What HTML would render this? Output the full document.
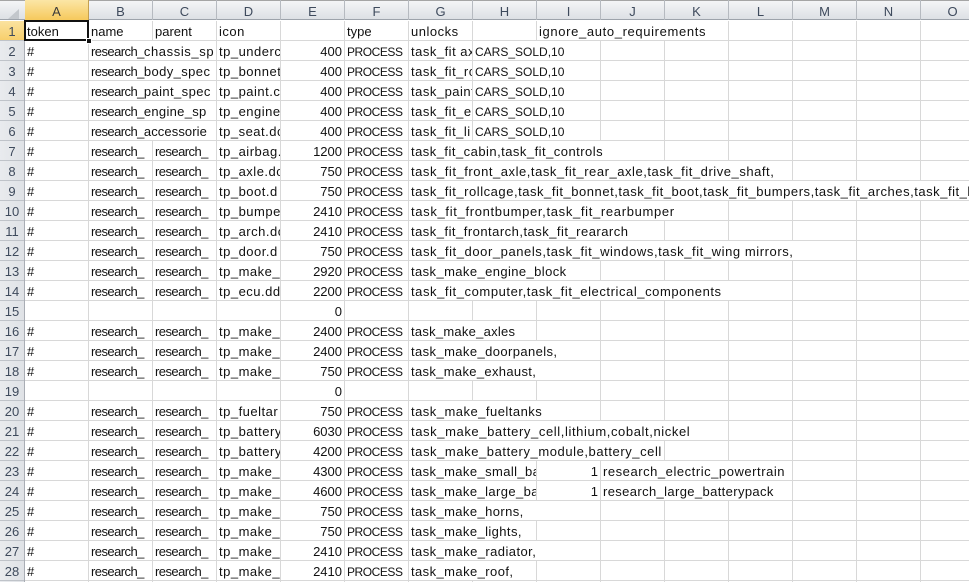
<!DOCTYPE html>
<html><head><meta charset="utf-8"><style>
html,body{margin:0;padding:0;background:#fff}
#p{position:relative;width:969px;height:582px;overflow:hidden;background:#fff;font-family:"Liberation Sans",sans-serif;font-size:13px;color:#111}
#g{position:absolute;left:25px;top:21px;width:944px;height:561px;background:linear-gradient(to right,transparent 63px,#d8d8d8 63px) 0 0/64px 20px,linear-gradient(to bottom,transparent 19px,#d8d8d8 19px) 0 0/64px 20px}
#hd{position:absolute;left:0;top:0;width:969px;height:20px;background:linear-gradient(#f4f5f7,#dde0e5);border-bottom:1px solid #9da3ab;border-top:1px solid #a5a5a5;box-sizing:border-box}
#rh{position:absolute;left:0;top:21px;width:24px;height:561px;background:linear-gradient(to bottom,#bfc3c9 1px,transparent 1px) 0 19px/24px 20px,linear-gradient(to right,#e9ebee,#dfe2e6);border-right:1px solid #a9adb4}
.h{position:absolute;top:-1px;height:20px;width:63px;line-height:23px;text-align:center;color:#3e4a5c;border-right:1px solid #b6bac0;font-size:13px}
.n{position:absolute;left:0;width:24px;height:19px;line-height:22px;text-align:center;color:#3e4a5c}
.c{position:absolute;height:19px;line-height:22px;overflow:hidden;white-space:nowrap;background:#fff;box-sizing:border-box;padding-left:2px}
.r{text-align:right;padding:0 2px 0 0}
.a{left:25px;width:63px}.b{left:89px;width:127px}.bb{left:89px;width:63px;letter-spacing:-.55px}.x{left:153px;width:63px;letter-spacing:-.55px}.d{left:217px;width:63px;letter-spacing:.5px}.e{left:281px;width:63px}.f{left:345px;width:63px;font-size:12px;letter-spacing:-.45px}.g{left:409px;width:63px;letter-spacing:.5px}.hh{left:473px;width:127px;font-size:12px}
.s{letter-spacing:-.55px}
</style></head><body><div id="p">
<div id="g"></div>
<div id="hd">
<div style="position:absolute;left:8px;top:8px;width:0;height:0;border-left:11px solid transparent;border-bottom:10px solid #c3c7cc"></div>
<div class="h" style="left:25px;background:linear-gradient(#fbe6a6,#f6c95c);color:#3a3a3a;border-right:1px solid #c4a050">A</div>
<div class="h" style="left:89px">B</div><div class="h" style="left:153px">C</div><div class="h" style="left:217px">D</div><div class="h" style="left:281px">E</div><div class="h" style="left:345px">F</div><div class="h" style="left:409px">G</div><div class="h" style="left:473px">H</div><div class="h" style="left:537px">I</div><div class="h" style="left:601px">J</div><div class="h" style="left:665px">K</div><div class="h" style="left:729px">L</div><div class="h" style="left:793px">M</div><div class="h" style="left:857px">N</div><div class="h" style="left:921px">O</div>
</div>
<div id="rh"></div>
<div class="n" style="top:21px;background:linear-gradient(#fbe3a0,#f7cf6c)">1</div>
<div class="n" style="top:41px">2</div><div class="n" style="top:61px">3</div><div class="n" style="top:81px">4</div><div class="n" style="top:101px">5</div><div class="n" style="top:121px">6</div><div class="n" style="top:141px">7</div><div class="n" style="top:161px">8</div><div class="n" style="top:181px">9</div><div class="n" style="top:201px">10</div><div class="n" style="top:221px">11</div><div class="n" style="top:241px">12</div><div class="n" style="top:261px">13</div><div class="n" style="top:281px">14</div><div class="n" style="top:301px">15</div><div class="n" style="top:321px">16</div><div class="n" style="top:341px">17</div><div class="n" style="top:361px">18</div><div class="n" style="top:381px">19</div><div class="n" style="top:401px">20</div><div class="n" style="top:421px">21</div><div class="n" style="top:441px">22</div><div class="n" style="top:461px">23</div><div class="n" style="top:481px">24</div><div class="n" style="top:501px">25</div><div class="n" style="top:521px">26</div><div class="n" style="top:541px">27</div><div class="n" style="top:561px">28</div>

<div class="c a" style="top:21px">token</div><div class="c" style="left:89px;width:63px;top:21px">name</div><div class="c" style="left:153px;width:63px;top:21px">parent</div><div class="c d" style="top:21px">icon</div><div class="c f" style="top:21px;font-size:13px;letter-spacing:0">type</div><div class="c g" style="top:21px">unlocks</div><div class="c" style="left:537px;top:21px;width:191px;letter-spacing:.64px">ignore_auto_requirements</div>

<div class="c a" style="top:41px">#</div><div class="c b" style="top:41px;letter-spacing:.6px"><span class="s">research_</span>chassis_sp</div><div class="c d" style="top:41px">tp_underc</div><div class="c e r" style="top:41px">400</div><div class="c f" style="top:41px">PROCESS</div><div class="c g" style="top:41px">task_fit ax</div><div class="c hh" style="top:41px">CARS_SOLD,10</div>
<div class="c a" style="top:61px">#</div><div class="c b" style="top:61px;letter-spacing:.4px"><span class="s">research_</span>body_spec</div><div class="c d" style="top:61px">tp_bonnet</div><div class="c e r" style="top:61px">400</div><div class="c f" style="top:61px">PROCESS</div><div class="c g" style="top:61px">task_fit_rc</div><div class="c hh" style="top:61px">CARS_SOLD,10</div>
<div class="c a" style="top:81px">#</div><div class="c b" style="top:81px;letter-spacing:.4px"><span class="s">research_</span>paint_spec</div><div class="c d" style="top:81px">tp_paint.c</div><div class="c e r" style="top:81px">400</div><div class="c f" style="top:81px">PROCESS</div><div class="c g" style="top:81px">task_paint</div><div class="c hh" style="top:81px">CARS_SOLD,10</div>
<div class="c a" style="top:101px">#</div><div class="c b" style="top:101px;letter-spacing:.3px"><span class="s">research_</span>engine_sp</div><div class="c d" style="top:101px">tp_engine</div><div class="c e r" style="top:101px">400</div><div class="c f" style="top:101px">PROCESS</div><div class="c g" style="top:101px">task_fit_e</div><div class="c hh" style="top:101px">CARS_SOLD,10</div>
<div class="c a" style="top:121px">#</div><div class="c b" style="top:121px;letter-spacing:.1px"><span class="s">research_</span>accessorie</div><div class="c d" style="top:121px">tp_seat.dc</div><div class="c e r" style="top:121px">400</div><div class="c f" style="top:121px">PROCESS</div><div class="c g" style="top:121px">task_fit_li</div><div class="c hh" style="top:121px">CARS_SOLD,10</div>
<div class="c a" style="top:141px">#</div><div class="c bb" style="top:141px">research_</div><div class="c x" style="top:141px">research_</div><div class="c d" style="top:141px">tp_airbag.</div><div class="c e r" style="top:141px">1200</div><div class="c f" style="top:141px">PROCESS</div><div class="c g" style="top:141px;width:255px;letter-spacing:.47px">task_fit_cabin,task_fit_controls</div>
<div class="c a" style="top:161px">#</div><div class="c bb" style="top:161px">research_</div><div class="c x" style="top:161px">research_</div><div class="c d" style="top:161px">tp_axle.dc</div><div class="c e r" style="top:161px">750</div><div class="c f" style="top:161px">PROCESS</div><div class="c g" style="top:161px;width:383px;letter-spacing:.54px">task_fit_front_axle,task_fit_rear_axle,task_fit_drive_shaft,</div>
<div class="c a" style="top:181px">#</div><div class="c bb" style="top:181px">research_</div><div class="c x" style="top:181px">research_</div><div class="c d" style="top:181px">tp_boot.d</div><div class="c e r" style="top:181px">750</div><div class="c f" style="top:181px">PROCESS</div><div class="c g" style="top:181px;width:560px;letter-spacing:.53px">task_fit_rollcage,task_fit_bonnet,task_fit_boot,task_fit_bumpers,task_fit_arches,task_fit_lights</div>
<div class="c a" style="top:201px">#</div><div class="c bb" style="top:201px">research_</div><div class="c x" style="top:201px">research_</div><div class="c d" style="top:201px">tp_bumpe</div><div class="c e r" style="top:201px">2410</div><div class="c f" style="top:201px">PROCESS</div><div class="c g" style="top:201px;width:319px;letter-spacing:.67px">task_fit_frontbumper,task_fit_rearbumper</div>
<div class="c a" style="top:221px">#</div><div class="c bb" style="top:221px">research_</div><div class="c x" style="top:221px">research_</div><div class="c d" style="top:221px">tp_arch.dc</div><div class="c e r" style="top:221px">2410</div><div class="c f" style="top:221px">PROCESS</div><div class="c g" style="top:221px;width:255px;letter-spacing:.48px">task_fit_frontarch,task_fit_reararch</div>
<div class="c a" style="top:241px">#</div><div class="c bb" style="top:241px">research_</div><div class="c x" style="top:241px">research_</div><div class="c d" style="top:241px">tp_door.d</div><div class="c e r" style="top:241px">750</div><div class="c f" style="top:241px">PROCESS</div><div class="c g" style="top:241px;width:447px;letter-spacing:.57px">task_fit_door_panels,task_fit_windows,task_fit_wing mirrors,</div>
<div class="c a" style="top:261px">#</div><div class="c bb" style="top:261px">research_</div><div class="c x" style="top:261px">research_</div><div class="c d" style="top:261px">tp_make_</div><div class="c e r" style="top:261px">2920</div><div class="c f" style="top:261px">PROCESS</div><div class="c g" style="top:261px;width:191px;letter-spacing:.4px">task_make_engine_block</div>
<div class="c a" style="top:281px">#</div><div class="c bb" style="top:281px">research_</div><div class="c x" style="top:281px">research_</div><div class="c d" style="top:281px">tp_ecu.dd</div><div class="c e r" style="top:281px">2200</div><div class="c f" style="top:281px">PROCESS</div><div class="c g" style="top:281px;width:383px;letter-spacing:.57px">task_fit_computer,task_fit_electrical_components</div>
<div class="c e r" style="top:301px">0</div>
<div class="c a" style="top:321px">#</div><div class="c bb" style="top:321px">research_</div><div class="c x" style="top:321px">research_</div><div class="c d" style="top:321px">tp_make_</div><div class="c e r" style="top:321px">2400</div><div class="c f" style="top:321px">PROCESS</div><div class="c g" style="top:321px;width:127px;letter-spacing:.25px">task_make_axles</div>
<div class="c a" style="top:341px">#</div><div class="c bb" style="top:341px">research_</div><div class="c x" style="top:341px">research_</div><div class="c d" style="top:341px">tp_make_</div><div class="c e r" style="top:341px">2400</div><div class="c f" style="top:341px">PROCESS</div><div class="c g" style="top:341px;width:191px;letter-spacing:.4px">task_make_doorpanels,</div>
<div class="c a" style="top:361px">#</div><div class="c bb" style="top:361px">research_</div><div class="c x" style="top:361px">research_</div><div class="c d" style="top:361px">tp_make_</div><div class="c e r" style="top:361px">750</div><div class="c f" style="top:361px">PROCESS</div><div class="c g" style="top:361px;width:191px;letter-spacing:.33px">task_make_exhaust,</div>
<div class="c e r" style="top:381px">0</div>
<div class="c a" style="top:401px">#</div><div class="c bb" style="top:401px">research_</div><div class="c x" style="top:401px">research_</div><div class="c d" style="top:401px">tp_fueltar</div><div class="c e r" style="top:401px">750</div><div class="c f" style="top:401px">PROCESS</div><div class="c g" style="top:401px;width:191px;letter-spacing:.48px">task_make_fueltanks</div>
<div class="c a" style="top:421px">#</div><div class="c bb" style="top:421px">research_</div><div class="c x" style="top:421px">research_</div><div class="c d" style="top:421px">tp_battery</div><div class="c e r" style="top:421px">6030</div><div class="c f" style="top:421px">PROCESS</div><div class="c g" style="top:421px;width:319px;letter-spacing:.6px">task_make_battery_cell,lithium,cobalt,nickel</div>
<div class="c a" style="top:441px">#</div><div class="c bb" style="top:441px">research_</div><div class="c x" style="top:441px">research_</div><div class="c d" style="top:441px">tp_battery</div><div class="c e r" style="top:441px">4200</div><div class="c f" style="top:441px">PROCESS</div><div class="c g" style="top:441px;width:255px;letter-spacing:.57px">task_make_battery_module,battery_cell</div>
<div class="c a" style="top:461px">#</div><div class="c bb" style="top:461px">research_</div><div class="c x" style="top:461px">research_</div><div class="c d" style="top:461px">tp_make_</div><div class="c e r" style="top:461px">4300</div><div class="c f" style="top:461px">PROCESS</div><div class="c g" style="top:461px;width:127px;letter-spacing:.4px">task_make_small_battery</div><div class="c r" style="left:537px;top:461px;width:63px">1</div><div class="c" style="left:601px;top:461px;width:191px;letter-spacing:.54px">research_electric_powertrain</div>
<div class="c a" style="top:481px">#</div><div class="c bb" style="top:481px">research_</div><div class="c x" style="top:481px">research_</div><div class="c d" style="top:481px">tp_make_</div><div class="c e r" style="top:481px">4600</div><div class="c f" style="top:481px">PROCESS</div><div class="c g" style="top:481px;width:127px;letter-spacing:.4px">task_make_large_battery</div><div class="c r" style="left:537px;top:481px;width:63px">1</div><div class="c" style="left:601px;top:481px;width:191px;letter-spacing:.37px">research_large_batterypack</div>
<div class="c a" style="top:501px">#</div><div class="c bb" style="top:501px">research_</div><div class="c x" style="top:501px">research_</div><div class="c d" style="top:501px">tp_make_</div><div class="c e r" style="top:501px">750</div><div class="c f" style="top:501px">PROCESS</div><div class="c g" style="top:501px;width:191px;letter-spacing:.4px">task_make_horns,</div>
<div class="c a" style="top:521px">#</div><div class="c bb" style="top:521px">research_</div><div class="c x" style="top:521px">research_</div><div class="c d" style="top:521px">tp_make_</div><div class="c e r" style="top:521px">750</div><div class="c f" style="top:521px">PROCESS</div><div class="c g" style="top:521px;width:127px;letter-spacing:.4px">task_make_lights,</div>
<div class="c a" style="top:541px">#</div><div class="c bb" style="top:541px">research_</div><div class="c x" style="top:541px">research_</div><div class="c d" style="top:541px">tp_make_</div><div class="c e r" style="top:541px">2410</div><div class="c f" style="top:541px">PROCESS</div><div class="c g" style="top:541px;width:191px;letter-spacing:.43px">task_make_radiator,</div>
<div class="c a" style="top:561px">#</div><div class="c bb" style="top:561px">research_</div><div class="c x" style="top:561px">research_</div><div class="c d" style="top:561px">tp_make_</div><div class="c e r" style="top:561px">2410</div><div class="c f" style="top:561px">PROCESS</div><div class="c g" style="top:561px;width:127px;letter-spacing:.42px">task_make_roof,</div>

<div style="position:absolute;left:24px;top:20px;width:65px;height:21px;box-sizing:border-box;border:2px solid #111"></div>
<div style="position:absolute;left:86px;top:38px;width:6px;height:6px;background:#111;border:1px solid #fff;box-sizing:border-box"></div>
</div></body></html>
